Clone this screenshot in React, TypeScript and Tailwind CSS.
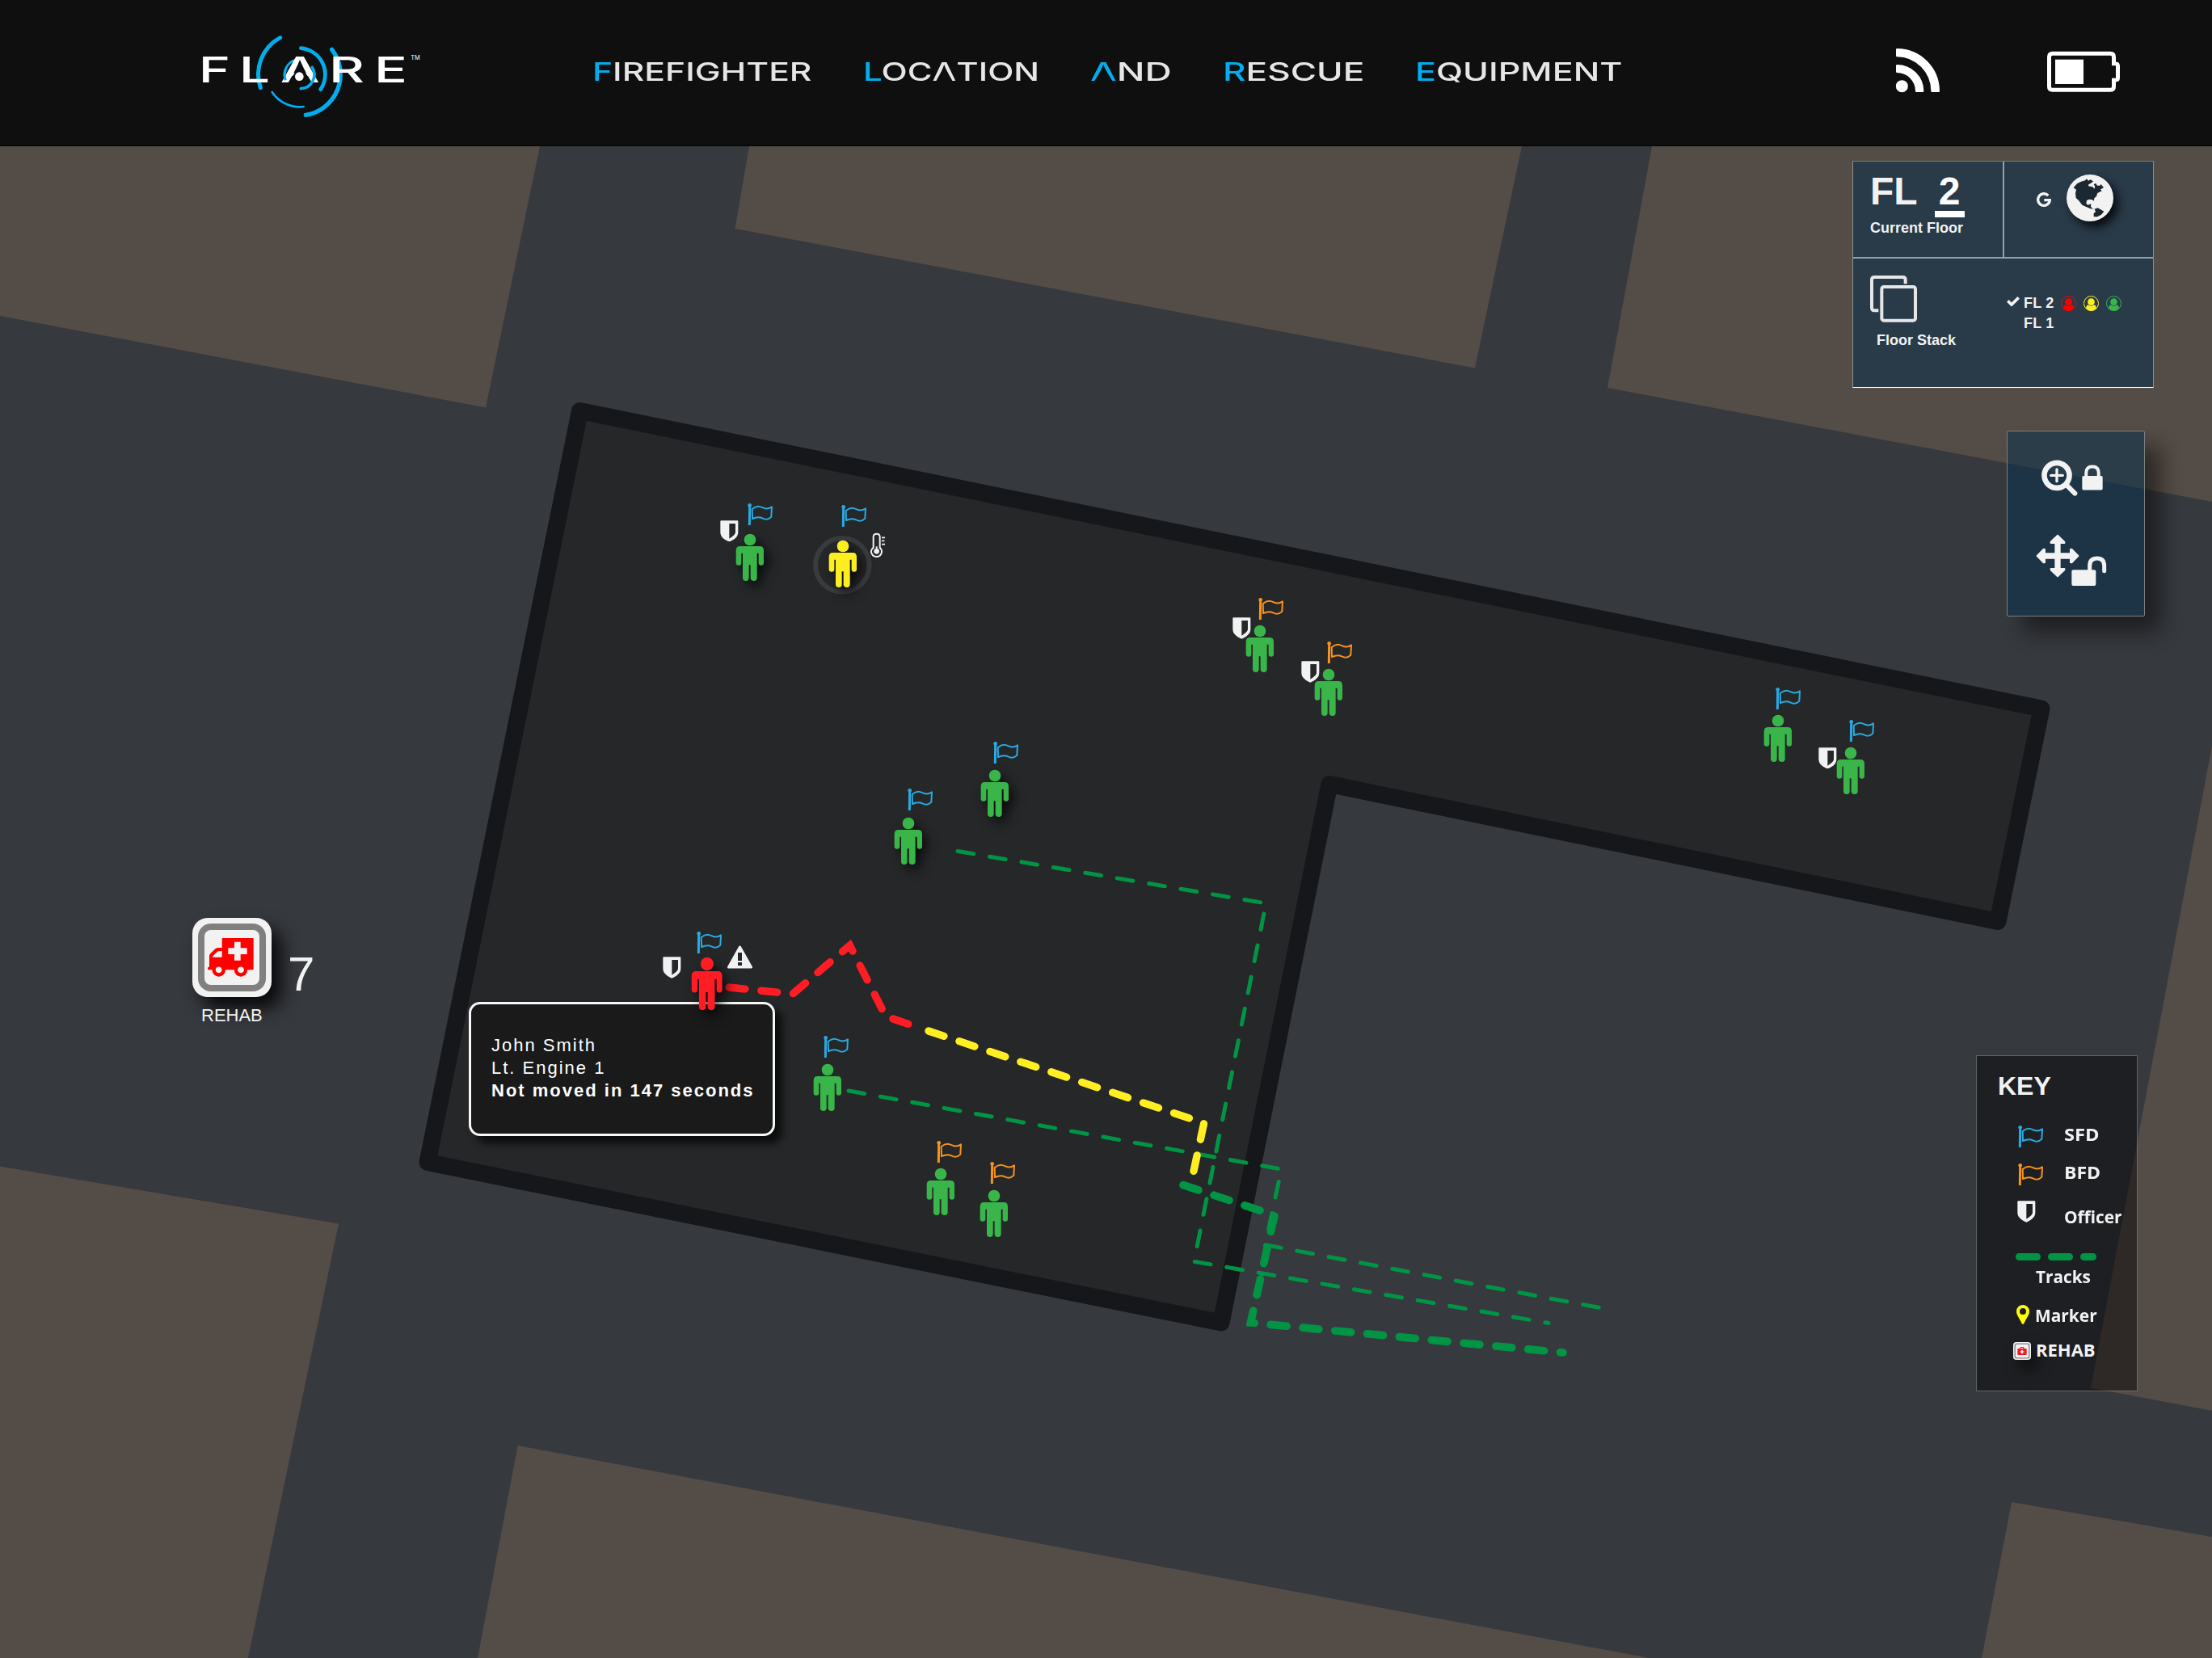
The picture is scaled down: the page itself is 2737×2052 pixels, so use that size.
import { useLayoutEffect, useRef, useState } from "react";
import type { ReactNode } from "react";

const GREEN = "#39b54a";
const BLUE = "#29abe2";
const ORANGE = "#f7931e";
const HEADER = 181;

/* Stretches its text horizontally so that it fills a fixed width. */
function FitText({ width, children }: { width: number; children: ReactNode }) {
  const inner = useRef<HTMLSpanElement>(null);
  const [scale, setScale] = useState(1);
  useLayoutEffect(() => {
    if (inner.current) setScale(width / inner.current.offsetWidth);
  }, [width]);
  return (
    <span className="inline-block" style={{ width }}>
      <span
        ref={inner}
        className="inline-block origin-left whitespace-nowrap"
        style={{ transform: `scaleX(${scale})` }}
      >
        {children}
      </span>
    </span>
  );
}

function BarlessA() {
  return (
    <span className="inline-block [clip-path:polygon(0_0,100%_0,100%_100%,91%_100%,50%_29%,9%_100%,0_100%)]">A</span>
  );
}

function HeaderWord({ text, width }: { text: string; width: number }) {
  return (
    <FitText width={width}>
      {text.split("").map((c, i) => (
        <span key={i} className={i === 0 ? "text-[#00aeef]" : ""}>
          {c === "A" ? <BarlessA /> : c}
        </span>
      ))}
    </FitText>
  );
}

function Logo() {
  const letter = { fontSize: 131, fontWeight: 500, lengthAdjust: "spacingAndGlyphs" as const };
  return (
    <svg className="h-[140px] w-[340px]" viewBox="0 0 1020 420" fontFamily="Inter, sans-serif" fill="#fff">
      <g fill="none" stroke="#00aeef" strokeLinecap="round">
        <path d="M380 80A154 154 0 0 0 307 266" strokeWidth="15" />
        <path d="M572 124A152 152 0 0 1 475 367" strokeWidth="16" />
        <path d="M457 119A98 98 0 0 1 530 272" strokeWidth="14" />
        <path d="M350 282A122 122 0 0 0 467 336" strokeWidth="8" />
        <path d="M433 164A57 57 0 0 0 400 238" strokeWidth="9" />
      </g>
      <text x="77" y="247" textLength="118" {...letter}>F</text>
      <text x="227" y="247" textLength="115" {...letter}>L</text>
      <text x="380" y="247" textLength="147" {...letter}>A</text>
      <path d="M454 176L411 248H497Z" fill="#0f0f0f" />
      <path d="M400 238A57 57 0 0 1 400 200" fill="none" stroke="#00aeef" strokeWidth="9" />
      <text x="561" y="247" textLength="132" {...letter}>R</text>
      <text x="729" y="247" textLength="123" {...letter}>E</text>
      <circle cx="451" cy="224" r="16" />
      <path d="M499 190A52 52 0 0 1 457 269" fill="none" stroke="#00aeef" strokeWidth="11" strokeLinecap="round" />
      <text x="865" y="161" fontSize="22" textLength="34" lengthAdjust="spacingAndGlyphs">TM</text>
    </svg>
  );
}

function SignalIcon() {
  return (
    <svg className="h-[56px] w-[56px]" viewBox="134 56 168 168" fill="#fff" stroke="#fff" strokeWidth="8" strokeLinejoin="round">
      <circle cx="159" cy="199" r="18.5" />
      <path d="M141 63A155 155 0 0 1 295 217H271A131 131 0 0 0 141 86Z" />
      <path d="M141 123A95 95 0 0 1 236 217H213A72 72 0 0 0 141 145Z" />
    </svg>
  );
}

function BatteryIcon() {
  return (
    <svg className="h-[52px] w-[92px]" viewBox="696 70 276 156">
      <path
        d="M720 80H934Q946.500 80 946.500 92V118H953Q961.500 118 961.500 126V170Q961.500 178 953 178H946.500V203Q946.500 215 934 215H719Q706.500 215 706.500 203V92Q706.500 80 719 80Z"
        fill="none" stroke="#fff" strokeWidth="15"
      />
      <rect x="939" y="125" width="15" height="45" fill="#0f0f0f" />
      <rect x="729" y="102" width="105" height="91" fill="#fff" />
    </svg>
  );
}

function Flag({ color }: { color: string }) {
  return (
    <svg className="h-[28.670px] w-[32px]" viewBox="194 66 96 86" fill="none" stroke={color} strokeLinejoin="round">
      <circle cx="202" cy="76" r="7" fill={color} stroke="none" />
      <path d="M202 76L201 150" strokeWidth="9" />
      <path d="M211 90C229 76 239 80 251 85C263 91 273 90 284 82L282 119C269 130 261 130 249 124C237 118 227 119 212 126Z" strokeWidth="6" />
    </svg>
  );
}

function Shield() {
  return (
    <svg className="h-[26.670px] w-[22.670px]" viewBox="92 131 68 80" fill="#f2f2f2" fillRule="evenodd">
      <path d="M95 132H157L159 134V175C159 194 142 203 126 211C110 203 93 194 93 175V134ZM126 143V199C140 190 149 184 149 174V143Z" />
    </svg>
  );
}

function Person({ color, big, shadow }: { color: string; big?: boolean; shadow?: boolean }) {
  return (
    <svg
      className={
        (big ? "h-[66.500px] w-[39px]" : "h-[59.330px] w-[35.330px]") +
        " block overflow-visible" +
        (shadow ? " drop-shadow-[6px_7px_7px_rgba(0,0,0,0.75)]" : "")
      }
      viewBox="150 180 106 178"
      preserveAspectRatio="none"
      fill={color}
    >
      <circle cx="204" cy="204" r="22" />
      <path d="M167 228H240Q255 228 255 244V290Q255 299 245.500 299Q236 299 236 290V254H230V346Q230 357 218.500 357Q206 357 206 346V298H200V346Q200 357 188.500 357Q177 357 177 346V254H172V290Q172 299 162 299Q152 299 152 290V244Q152 228 167 228Z" />
    </svg>
  );
}

function Thermometer() {
  return (
    <svg className="h-[32px] w-[20px]" viewBox="648 176 60 96" fill="none" stroke="#f2f2f2">
      <path d="M662 232V192Q662 181 674 181Q686 181 686 192V232Q694 239 693 249Q690 265 674 266Q657 265 654 249Q653 239 662 232Z" strokeWidth="6" />
      <circle cx="674" cy="246" r="10" fill="#f2f2f2" stroke="none" />
      <path d="M674 228V246" strokeWidth="6" />
      <path d="M693 195H705M693 207H703M693 220H705" strokeWidth="5" />
    </svg>
  );
}

function Warning() {
  return (
    <svg className="h-[29px] w-[31px]" viewBox="0 0 31 29" fill="#f2f2f2">
      <path d="M15.500 2L29.500 27H1.500Z" stroke="#f2f2f2" strokeWidth="3" strokeLinejoin="round" />
      <path d="M13 9H18V19H13ZM13 21H18V25H13Z" fill="#252729" />
    </svg>
  );
}

type Unit = {
  x: number;
  y: number;
  color?: string;
  flag: [number, number, string];
  shield?: [number, number];
  shadow?: boolean;
  big?: boolean;
};

const units: Unit[] = [
  { x: 928, y: 661, flag: [927.500, 623, BLUE], shield: [891, 644], shadow: true },
  { x: 1043, y: 669, color: "#fcee21", flag: [1043.500, 625, BLUE], shadow: true },
  { x: 1558.700, y: 774, flag: [1560, 740, ORANGE], shield: [1525, 764.500] },
  { x: 1644.300, y: 827.700, flag: [1645, 793.700, ORANGE], shield: [1610, 818.500] },
  { x: 2199.500, y: 885, flag: [2200, 851, BLUE] },
  { x: 2290, y: 925, flag: [2290.500, 891, BLUE], shield: [2250, 925] },
  { x: 1230.500, y: 953, flag: [1232, 918, BLUE], shadow: true },
  { x: 1124, y: 1012, flag: [1125.500, 976, BLUE], shadow: true },
  { x: 1023.600, y: 1317, flag: [1021.800, 1281.500, BLUE] },
  { x: 1164, y: 1446, flag: [1162, 1411.500, ORANGE] },
  { x: 1229.500, y: 1473, flag: [1228, 1438, ORANGE] },
  { x: 874.300, y: 1184.700, color: "#ff1d25", flag: [865, 1152.700, BLUE], shield: [820, 1184.500], shadow: true, big: true },
];

function At({ x, y, children }: { x: number; y: number; children: ReactNode }) {
  return (
    <div className="absolute" style={{ left: x, top: y - HEADER }}>
      {children}
    </div>
  );
}

function UnitMarker({ u }: { u: Unit }) {
  return (
    <>
      <At x={u.flag[0] - 3} y={u.flag[1] - 1}><Flag color={u.flag[2]} /></At>
      {u.shield && <At x={u.shield[0]} y={u.shield[1] - 0.5}><Shield /></At>}
      <At x={u.x - (u.big ? 19.800 : 18)} y={u.y - 0.7}>
        <Person color={u.color ?? GREEN} big={u.big} shadow={u.shadow} />
      </At>
    </>
  );
}

function MapDrawing() {
  return (
    <svg className="absolute inset-0 h-full w-full" viewBox="0 181 2737 1871">
      <g fill="#544c46">
        <path d="M0 181H668L601 504.500L0 391Z" />
        <path d="M927 181H1883L1825 455.600L909.500 283Z" />
        <path d="M2044 181H2737V621L1989 480Z" />
        <path d="M2737 923L2587 1717.700L2737 1746Z" />
        <path d="M2489 1859L2737 1902V2052H2452Z" />
        <path d="M640.600 1789L2040 2052H591Z" />
        <path d="M0 1443.500L419 1514.500L307 2052H0Z" />
      </g>
      <path
        d="M717.500 508.500L2526 877L2472 1140.500L1645 970.500L1511 1637L529 1438.500Z"
        fill="#252729" stroke="#15171a" strokeWidth="21" strokeLinejoin="round"
      />
      <g fill="none" strokeLinecap="round" strokeDasharray="20 20">
        <g stroke="#009444" strokeWidth="5">
          <path d="M1185 1053.500L1566.500 1118L1477.400 1561.300L1916 1637.500" />
          <path d="M1050 1350L1585.500 1447L1565.500 1540.700L1982 1619" />
        </g>
        <path d="M1464 1466.700L1577 1504L1547.500 1637L1934 1674" stroke="#009444" strokeWidth="9.700" />
        <path d="M1149 1276L1489.700 1390L1476 1454" stroke="#ffee22" strokeWidth="9.300" />
        <path d="M902 1222L981 1230L1051.500 1170L1096 1258L1130 1269.500" stroke="#ff1d25" strokeWidth="9.300" />
      </g>
      <circle cx="1042.300" cy="699.300" r="33.300" fill="none" stroke="#3a3b3e" strokeWidth="6" />
    </svg>
  );
}

function Ambulance() {
  return (
    <svg className="mr-[4px] h-[48px] w-[57px] shrink-0" viewBox="111 154 171 144" fill="#f00">
      <path d="M167 154H278Q281 154 281 158V268Q281 272 277 272H257A23 23 0 0 1 210 272H176A23 23 0 0 1 129 272H114Q111 272 111 269V264Q111 261 117 261V221Q117 214 122 210L140 193Q145 190 150 190H164V158Q164 154 167 154Z" />
      <circle cx="152" cy="273" r="24" />
      <circle cx="234" cy="273" r="24" />
      <g fill="#f2f2f2">
        <circle cx="152" cy="272" r="11.500" />
        <circle cx="234" cy="272" r="11.500" />
        <path d="M164 202V225H129L130 221L149 203Z" />
        <path d="M210 168H233V191H257V214H233V237H210V214H187V191H210Z" />
      </g>
    </svg>
  );
}

function Globe() {
  return (
    <svg className="h-[58px] w-[58px] overflow-visible drop-shadow-[6px_7px_6px_rgba(0,0,0,0.8)]" viewBox="861 109 174 174">
      <circle cx="948" cy="196" r="87" fill="#f2f2f2" />
      <g fill="#1b2731">
        <path d="M887 158L900 143L915 135L930 131L936 125L942 132L950 128L960 134L955 139L943 146L942 152L958 155L964 162L967 154L962 145L970 142L975 150L985 150L989 145L999 158L987 164L992 170L976 178L972 190L964 197L963 207L957 203L945 201L936 205L934 216L940 222L952 218L951 228L957 235L966 237L950 236L934 229L919 222L906 205L896 196L894 178L897 165Z" />
        <path d="M965 237L977 233L985 237L1000 246L990 258L975 266H962V253L969 248Z" />
      </g>
    </svg>
  );
}

function GoogleG() {
  return (
    <svg className="h-[18px] w-[18px]" viewBox="0 0 54 54" fill="none" stroke="#f2f2f2" strokeWidth="10">
      <path d="M43 12A22 22 0 1 0 49 29H28" />
    </svg>
  );
}

function StackIcon() {
  return (
    <svg className="h-[60px] w-[60px]" viewBox="130 481 180 180" fill="none" stroke="#e6e6e6" strokeWidth="12">
      <path d="M264 515V500Q264 490 254 490H149Q139 490 139 500V604Q139 614 149 614H164" />
      <rect x="176" y="526" width="125" height="125" rx="8" />
    </svg>
  );
}

function UserBadge({ color }: { color: string }) {
  return (
    <svg className="h-[19px] w-[19px]" viewBox="0 0 57 57">
      <circle cx="28.500" cy="28.500" r="27" fill="none" stroke={color} strokeWidth="3" />
      <circle cx="28.500" cy="23" r="13" fill={color} />
      <path d="M10 48Q8 36 18 34Q28 42 39 34Q49 36 47 48Q39 57 28.500 57Q18 57 10 48Z" fill={color} />
    </svg>
  );
}

function FloorPanel() {
  return (
    <section className="absolute left-[2292px] top-[18px] flex h-[281px] w-[373px] flex-col border border-b-white border-l-[#8d8f90] border-r-[#8d8f90] border-t-[#777b7e] bg-[#293a49] font-bold text-[#f2f2f2]">
      <div className="flex h-[120px] border-b-2 border-[#95a0a8]">
        <div className="flex w-[187px] flex-col border-r-2 border-[#95a0a8] pl-[21px] pt-[13px]">
          <div className="flex gap-[26px] text-[48px] leading-[48px]">
            <span>FL</span>
            <span className="text-white">2</span>
          </div>
          <div className="ml-[80px] h-[8px] w-[37px] bg-white" />
          <div className="mt-[4px] text-[18px] leading-[18px]">Current Floor</div>
        </div>
        <div className="flex items-start pl-[40px] pt-[16px]">
          <div className="pt-[22px]"><GoogleG /></div>
          <div className="pl-[19px]"><Globe /></div>
        </div>
      </div>
      <div className="flex pl-[20px] pt-[20px] text-[18px] leading-[18px]">
        <div className="w-[170px]">
          <StackIcon />
          <div className="pl-[9px] pt-[12px]">Floor Stack</div>
        </div>
        <div className="flex flex-col gap-[7px] pt-[26px]">
          <div className="flex h-[18px] items-center">
            <svg className="mb-[5px] h-[12px] w-[16px]" viewBox="0 0 48 36" fill="none" stroke="#f2f2f2" strokeWidth="11">
              <path d="M4 16L18 30L44 4" />
            </svg>
            <span className="ml-[5px] w-[46px] tracking-[0.200px]">FL 2</span>
            <div className="flex gap-[9px]">
              <UserBadge color="#ff0000" />
              <UserBadge color="#fcee21" />
              <UserBadge color={GREEN} />
            </div>
          </div>
          <div className="pl-[21px] tracking-[0.200px]">FL 1</div>
        </div>
      </div>
    </section>
  );
}

function ControlPanel() {
  return (
    <section className="absolute left-[2483px] top-[352px] flex h-[230px] w-[171px] flex-col rounded-[2px] border border-[#7c7f80] bg-[#042d4e]/50 shadow-[20px_20px_26px_rgba(0,0,0,0.45)]">
      <div className="flex h-[80px] items-start gap-[5px] pl-[42px] pt-[35px]">
        <svg className="h-[45px] w-[45px]" viewBox="197 176 135 135" fill="none" stroke="#f2f2f2">
          <circle cx="254" cy="234" r="46.500" strokeWidth="20" />
          <path d="M291 271L321 301" strokeWidth="18" strokeLinecap="round" />
          <path d="M254 212V256M232 234H276" strokeWidth="10" strokeLinecap="round" />
        </svg>
        <svg className="mt-[6px] h-[32px] w-[26px]" viewBox="345 195 79 96">
          <rect x="346" y="237" width="77" height="53" rx="5" fill="#f2f2f2" />
          <path d="M361 240V226Q361 202 384.500 202Q408 202 408 226V240" fill="none" stroke="#f2f2f2" strokeWidth="12" />
        </svg>
      </div>
      <div className="flex items-start pl-[35px] pt-[47px]">
        <svg className="h-[54px] w-[54px]" viewBox="177 453 162 162" fill="#f2f2f2" stroke="#f2f2f2" strokeWidth="6" strokeLinejoin="round">
          <path d="M258 458L283 482V486H266V526H306V510L310 509L334 534L310 559L306 558V542H266V582H283V586L258 610L233 586V582H250V542H210V558L206 559L182 534L206 509L210 510V526H250V486H233V482Z" />
        </svg>
        <svg className="-ml-[10px] mt-[27px] h-[38px] w-[44px]" viewBox="308 533 132 114">
          <rect x="309" y="585" width="90" height="59" rx="6" fill="#f2f2f2" />
          <path d="M376 590V570Q376 542 403.500 542Q430 542 430 570V589" fill="none" stroke="#f2f2f2" strokeWidth="15" strokeLinecap="round" />
        </svg>
      </div>
    </section>
  );
}

function KeyPanel() {
  return (
    <section className="absolute left-[2445px] top-[1125px] h-[416px] w-[200px] border border-white/30 bg-black/45 font-['Open_Sans','Noto_Sans',sans-serif] text-[22px] font-bold leading-[22px] text-[#f2f2f2]">
      <h2 className="pl-[26px] pt-[21px] font-['Liberation_Sans',Arial,sans-serif] text-[32px] leading-[32px]">KEY</h2>
      <div className="mt-[32px] flex h-[47px] gap-[25px] pl-[51px]">
        <Flag color={BLUE} />
        <FitText width={43}>SFD</FitText>
      </div>
      <div className="flex h-[47px] gap-[25px] pl-[51px]">
        <Flag color={ORANGE} />
        <FitText width={45}>BFD</FitText>
      </div>
      <div className="flex h-[65px] gap-[35px] pl-[50px]">
        <Shield />
        <div className="pt-[8px]"><FitText width={72}>Officer</FitText></div>
      </div>
      <div className="flex h-[9px] gap-[9px] pl-[48px]">
        <span className="w-[31px] rounded-full bg-[#009444]" />
        <span className="w-[31px] rounded-full bg-[#009444]" />
        <span className="w-[20px] rounded-full bg-[#009444]" />
      </div>
      <div className="h-[55px] pl-[73px] pt-[8px]"><FitText width={68}>Tracks</FitText></div>
      <div className="flex h-[44px] gap-[7px] pl-[49px]">
        <svg className="h-[24px] w-[16px]" viewBox="0 0 48 72" fill="#ff0" fillRule="evenodd">
          <path d="M24 0A24 24 0 0 1 48 24C48 38 36 50 27 71H21C12 50 0 38 0 24A24 24 0 0 1 24 0ZM24 12A12 12 0 0 0 24 36A12 12 0 0 0 24 12Z" />
        </svg>
        <div className="pt-px"><FitText width={77}>Marker</FitText></div>
      </div>
      <div className="flex items-start gap-[6px] pl-[45px]">
        <svg className="mt-[2px] h-[22px] w-[22px] overflow-visible drop-shadow-[8px_10px_9px_rgba(0,0,0,0.6)]" viewBox="0 0 66 66">
          <rect width="66" height="66" rx="12" fill="#f2f2f2" />
          <rect x="6.500" y="6.500" width="53" height="53" rx="8" fill="none" stroke="#808080" strokeWidth="4" />
          <path d="M26 24V18H40V24H48Q50 24 50 27V46Q50 48 48 48H18Q16 48 16 46V27Q16 24 18 24ZM29 24H37V21H29Z" fill="#ed1c24" fillRule="evenodd" />
          <path d="M33 29V43M26 36H40" stroke="#f2f2f2" strokeWidth="5" />
        </svg>
        <FitText width={74}>REHAB</FitText>
      </div>
    </section>
  );
}

function Rehab() {
  return (
    <div className="absolute left-[238px] top-[955px] text-[#f2f2f2]">
      <div className="flex items-start gap-[20px]">
        <div className="h-[98px] w-[98px] rounded-[19px] bg-[#f2f2f2] p-[7px] shadow-[12px_14px_22px_rgba(0,0,0,0.85)]">
          <div className="flex h-full w-full items-center justify-center rounded-[16px] border-8 border-[#808080] bg-[#f2f2f2]">
            <Ambulance />
          </div>
        </div>
        <div className="pt-[40px] text-[60px] leading-[60px]">7</div>
      </div>
      <div className="pl-[11px] pt-[10px] text-[22px] leading-[22px]">REHAB</div>
    </div>
  );
}

export default function App() {
  return (
    <div className="h-[2052px] w-[2737px] overflow-hidden bg-[#36393e] font-['Liberation_Sans',Arial,sans-serif]">
      <header className="flex h-[181px] items-start border-b border-black bg-[#0f0f0f]">
        <div className="ml-[220px] mt-[20px] w-[340px]"><Logo /></div>
        <nav className="ml-[173px] mt-[73px] flex gap-[63px] font-[Inter,sans-serif] text-[31px] font-medium leading-[31px] text-[#e6e6e6]">
          <HeaderWord text="FIREFIGHTER" width={272} />
          <HeaderWord text="LOCATION" width={218} />
          <HeaderWord text="AND" width={101} />
          <HeaderWord text="RESCUE" width={175} />
          <HeaderWord text="EQUIPMENT" width={257} />
        </nav>
        <div className="ml-[337px] mt-[59px]"><SignalIcon /></div>
        <div className="ml-[131px] mt-[63px]"><BatteryIcon /></div>
      </header>
      <main className="relative h-[1871px]">
        <MapDrawing />
        <div className="absolute left-[580px] top-[1059px] h-[166px] w-[379px] rounded-[14px] border-[3px] border-[#f7f7f7] bg-[#1a1a1a] pl-[25px] pt-[37px] text-[22px] leading-[28px] tracking-[2px] text-white shadow-[9px_9px_10px_rgba(0,0,0,0.7)]">
          <div>John Smith</div>
          <div>Lt. Engine 1</div>
          <div className="font-bold">Not moved in 147 seconds</div>
        </div>
        {units.map((u, i) => <UnitMarker key={i} u={u} />)}
        <At x={1076} y={658.7}><Thermometer /></At>
        <At x={899.5} y={1170}><Warning /></At>
        <Rehab />
        <FloorPanel />
        <ControlPanel />
        <KeyPanel />
      </main>
    </div>
  );
}
